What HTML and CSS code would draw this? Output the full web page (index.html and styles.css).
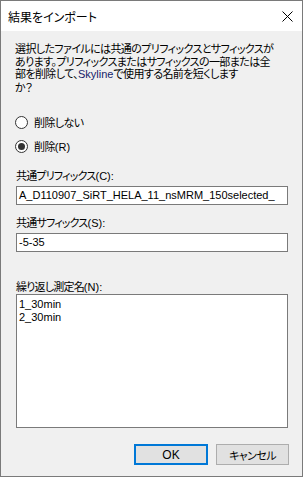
FILE: index.html
```html
<!DOCTYPE html>
<html lang="ja">
<head>
    <meta charset="UTF-8">
    <title>結果をインポート</title>
    <link rel="stylesheet" href="styles.css">
</head>
<body>
    <div class="dialog">
        <div class="titlebar">
            <span class="title">結果をインポート</span>
            <svg class="close" width="11" height="11" viewBox="0 0 11 11">
                <path d="M0.5 0.5 L10.5 10.5 M10.5 0.5 L0.5 10.5" stroke="#000" stroke-width="1" fill="none"/>
            </svg>
        </div>
        <div class="content">
            <p class="message">選択したファイルには共通のプリフィックスとサフィックスが<br>あります。プリフィックスまたはサフィックスの一部または全<br>部を削除して、<span class="latin">Skyline</span>で使用する名前を短くします<br>か？</p>

            <div class="options">
                <label class="radio"><span class="circle"></span><span>削除しない</span></label>
                <label class="radio"><span class="circle checked"></span><span>削除<span class="latin">(R)</span></span></label>
            </div>

            <div class="field">
                <div class="label">共通プリフィックス<span class="latin">(C):</span></div>
                <div class="input latin">A_D110907_SiRT_HELA_11_nsMRM_150selected_</div>
            </div>

            <div class="field">
                <div class="label">共通サフィックス<span class="latin">(S):</span></div>
                <div class="input latin">-5-35</div>
            </div>

            <div class="field replicates">
                <div class="label">繰り返し測定名<span class="latin">(N):</span></div>
                <div class="list latin">
                    <div>1_30min</div>
                    <div>2_30min</div>
                </div>
            </div>

            <div class="buttons">
                <button class="btn primary latin">OK</button>
                <button class="btn cancel">キャンセル</button>
            </div>
        </div>
    </div>
</body>
</html>
```

FILE: styles.css
```css
body {
    margin: 0;
    padding: 0;
    font-family: "Noto Sans CJK JP", sans-serif;
    font-size: 12px;
    color: #000;
}
.latin {
    font-family: "Liberation Sans", "Noto Sans CJK JP", sans-serif;
    letter-spacing: 0;
}
.dialog {
    width: 303px;
    height: 477px;
    box-sizing: border-box;
    border: 1px solid #7a7a7a;
    background: #f0f0f0;
    display: flex;
    flex-direction: column;
}
.titlebar {
    height: 30px;
    flex-shrink: 0;
    background: #fff;
    display: flex;
    align-items: center;
    justify-content: space-between;
    padding: 0 9px 0 7px;
}
.title {
    font-size: 12px;
    font-feature-settings: "palt";
}
.content {
    padding: 11px 14px 0 14px;
    display: flex;
    flex-direction: column;
}
.message {
    margin: 0;
    font-size: 11px;
    letter-spacing: -0.6px;
    line-height: 12.6px;
    font-feature-settings: "palt";
    white-space: nowrap;
}
.message .latin {
    color: #16246a;
}
.options {
    margin-top: 21px;
    display: flex;
    flex-direction: column;
    gap: 8px;
}
.radio {
    display: flex;
    align-items: center;
    height: 16px;
    line-height: 16px;
    gap: 6px;
    font-size: 11px;
    letter-spacing: -0.6px;
    font-feature-settings: "palt";
}
.circle {
    width: 11px;
    height: 11px;
    border: 1px solid #333;
    border-radius: 50%;
    background: #fff;
    display: flex;
    align-items: center;
    justify-content: center;
}
.circle.checked::after {
    content: "";
    width: 7px;
    height: 7px;
    border-radius: 50%;
    background: #333;
}
.field {
    margin-top: 15px;
    display: flex;
    flex-direction: column;
    gap: 4px;
}
.field + .field {
    margin-top: 11px;
}
.field.replicates {
    margin-top: 28px;
    gap: 1px;
}
.label {
    height: 13px;
    line-height: 13px;
    padding-left: 1px;
    font-size: 11px;
    letter-spacing: -0.8px;
    font-feature-settings: "palt";
    white-space: nowrap;
}
.label .latin {
    font-size: 11px;
    line-height: 13px;
}
.input {
    margin-left: 1px;
    height: 17px;
    border: 1px solid #7a7a7a;
    background: #fff;
    padding: 0 2px;
    line-height: 17px;
    font-size: 11px;
    white-space: nowrap;
    overflow: hidden;
}
.list {
    margin-left: 1px;
    box-sizing: border-box;
    height: 134px;
    border: 1px solid #7a7a7a;
    background: #fff;
    padding: 3px 2px 0;
    font-size: 11px;
    line-height: 12.5px;
}
.buttons {
    margin-top: 16px;
    margin-right: -1px;
    display: flex;
    justify-content: flex-end;
    gap: 8px;
}
.btn {
    width: 74px;
    height: 21px;
    box-sizing: border-box;
    background: #e1e1e1;
    border: 1px solid #adadad;
    font-family: "Noto Sans CJK JP", sans-serif;
    font-size: 11px;
    letter-spacing: -0.6px;
    font-feature-settings: "palt";
    color: #000;
    padding: 0;
    margin: 0;
}
.btn.cancel {
    width: 73px;
}
.btn.primary {
    border: 2px solid #0078d7;
    font-family: "Liberation Sans", sans-serif;
    font-size: 12px;
    letter-spacing: 0;
}
```
